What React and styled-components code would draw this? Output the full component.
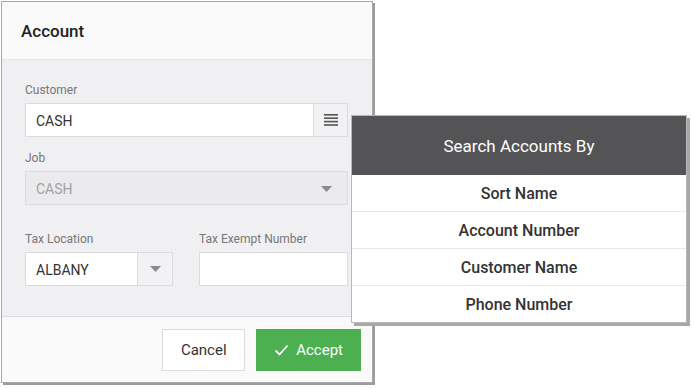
import React from 'react';
import styled, { createGlobalStyle } from 'styled-components';

const Global = createGlobalStyle`
  body {
    margin: 0;
    background: #fff;
    font-family: Roboto, "Liberation Sans", sans-serif;
  }
`;

const searchOptions = ['Sort Name', 'Account Number', 'Customer Name', 'Phone Number'];

function Arrow() {
  return (
    <svg width="11" height="6" viewBox="0 0 11 6">
      <path d="M0 0 L11 0 L5.5 6 Z" fill="#8a8a8c" />
    </svg>
  );
}

function Hamburger() {
  return (
    <svg width="14" height="12" viewBox="0 0 14 12">
      <rect x="0" y="0" width="14" height="1.6" fill="#555" />
      <rect x="0" y="3.4" width="14" height="1.6" fill="#555" />
      <rect x="0" y="6.8" width="14" height="1.6" fill="#555" />
      <rect x="0" y="10.2" width="14" height="1.6" fill="#555" />
    </svg>
  );
}

function Check() {
  return (
    <svg width="15" height="12" viewBox="0 0 15 12">
      <path d="M1.5 6.5 L5.5 10.5 L13.5 1.5" fill="none" stroke="#fff" strokeWidth="1.8" />
    </svg>
  );
}

export default function App() {
  return (
    <Page>
      <Global />
      <Dialog>
        <Header>Account</Header>
        <Body>
          <Field>
            <Label>Customer</Label>
            <InputGroup>
              <Input>CASH</Input>
              <AddOn><Hamburger /></AddOn>
            </InputGroup>
          </Field>
          <Field>
            <Label>Job</Label>
            <Input disabled>
              CASH
              <Arrow />
            </Input>
          </Field>
          <Row>
            <Field>
              <Label>Tax Location</Label>
              <InputGroup>
                <Input>ALBANY</Input>
                <AddOn wide><Arrow /></AddOn>
              </InputGroup>
            </Field>
            <Field>
              <Label>Tax Exempt Number</Label>
              <Input />
            </Field>
          </Row>
        </Body>
        <Footer>
          <Button>Cancel</Button>
          <Button primary><Check /> Accept</Button>
        </Footer>
      </Dialog>
      <Popup>
        <PopupHeader>Search Accounts By</PopupHeader>
        {searchOptions.map((opt) => (
          <Option key={opt}>{opt}</Option>
        ))}
      </Popup>
    </Page>
  );
}

const Page = styled.div`
  position: relative;
  width: 694px;
  height: 389px;
  padding: 1px 0 0 1px;
  box-sizing: border-box;
`;

const Dialog = styled.div`
  width: 372px;
  height: 382px;
  box-sizing: border-box;
  border: 1px solid #a8a8a8;
  box-shadow: 2px 2px 0 #9c9c9c;
  display: flex;
  flex-direction: column;
  background: #fafafa;
`;

const Header = styled.div`
  height: 58px;
  flex-shrink: 0;
  box-sizing: border-box;
  border-bottom: 1px solid #e4e4e6;
  padding: 0 19px;
  display: flex;
  align-items: center;
  font-size: 17px;
  font-weight: 500;
  color: #222;
  background: #fafafa;
`;

const Body = styled.div`
  background: #f0f0f2;
  padding: 22px 24px 30px 23px;
  display: flex;
  flex-direction: column;
  gap: 13px;
  border-bottom: 1px solid #dcdcde;
`;

const Field = styled.div`
  display: flex;
  flex-direction: column;
  flex: 1;
`;

const Row = styled.div`
  display: flex;
  gap: 26px;
  margin-top: 13px;
  & > ${Field}:first-child { flex: 0 0 148px; }
`;

const Label = styled.div`
  font-size: 12px;
  line-height: 16px;
  color: #777;
  margin-bottom: 5px;
`;

const InputGroup = styled.div`
  display: flex;
`;

const Input = styled.div`
  flex: 1 1 auto;
  min-width: 0;
  height: 34px;
  box-sizing: border-box;
  border: 1px solid #dcdcde;
  background: ${(p) => (p.disabled ? '#ebebed' : '#fff')};
  color: ${(p) => (p.disabled ? '#a2a2a2' : '#333')};
  font-size: 14px;
  padding: 1px 15px 0 10px;
  display: flex;
  align-items: center;
  justify-content: space-between;
`;

const AddOn = styled.div`
  flex: 0 0 auto;
  width: ${(p) => (p.wide ? '35px' : '34px')};
  height: 34px;
  box-sizing: border-box;
  border: 1px solid #dcdcde;
  border-left: none;
  background: #f2f2f4;
  display: flex;
  align-items: center;
  justify-content: center;
`;

const Footer = styled.div`
  flex: 1;
  background: #fafafa;
  display: flex;
  justify-content: flex-end;
  align-items: flex-start;
  padding: 12px 11px 0 0;
  gap: 11px;
`;

const Button = styled.button`
  height: 42px;
  box-sizing: border-box;
  padding: 0 17px;
  min-width: ${(p) => (p.primary ? '104px' : '83px')};
  border: 1px solid ${(p) => (p.primary ? '#4caf50' : '#dcdcde')};
  background: ${(p) => (p.primary ? '#4caf50' : '#fff')};
  color: ${(p) => (p.primary ? '#fff' : '#333')};
  font-family: Roboto, "Liberation Sans", sans-serif;
  font-size: 15px;
  display: flex;
  align-items: center;
  justify-content: center;
  gap: 7px;
`;

const Popup = styled.div`
  position: absolute;
  left: 351px;
  top: 115px;
  width: 336px;
  background: #fff;
  border: 1px solid #b8b8b8;
  box-sizing: border-box;
  box-shadow: 3px 3px 0 #a8a8a8;
`;

const PopupHeader = styled.div`
  height: 59px;
  background: #545456;
  color: #fff;
  font-size: 17px;
  display: flex;
  align-items: center;
  justify-content: center;
`;

const Option = styled.div`
  height: 37px;
  box-sizing: border-box;
  border-bottom: 1px solid #e8e8ea;
  display: flex;
  align-items: center;
  justify-content: center;
  font-size: 16px;
  font-weight: 500;
  color: #333;
  &:last-child { border-bottom: none; height: 36px; }
`;
